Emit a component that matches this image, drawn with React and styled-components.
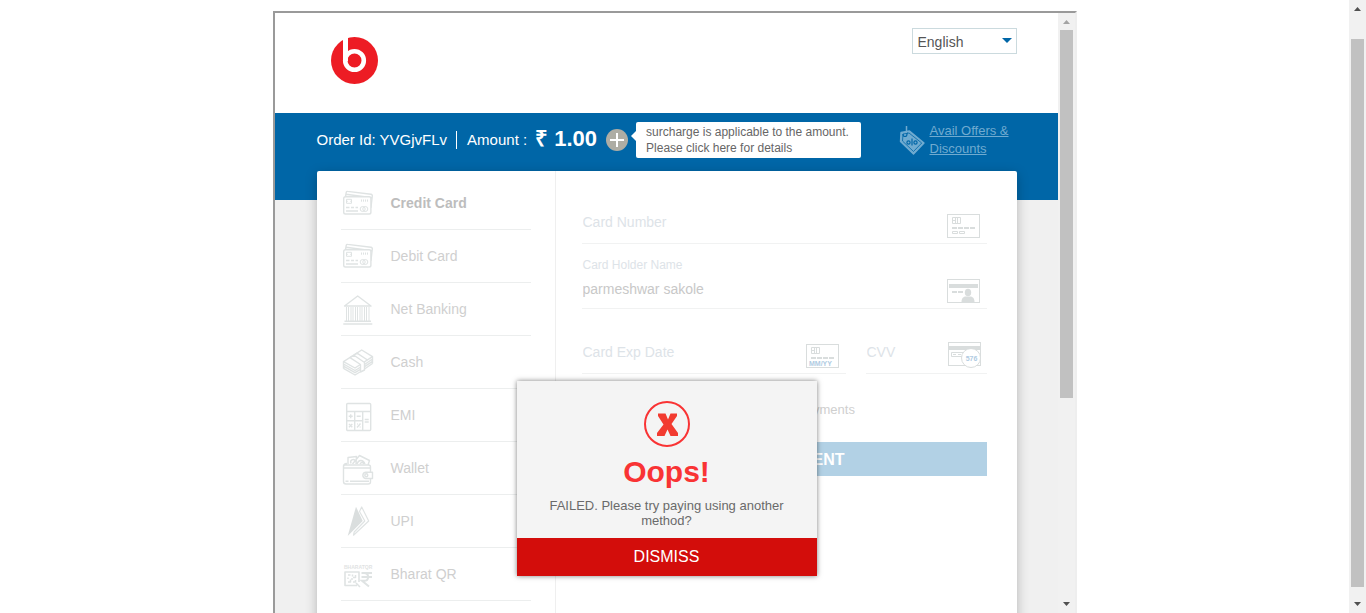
import React from "react";
import styled, { createGlobalStyle } from "styled-components";

const GlobalStyle = createGlobalStyle`
  *, *::before, *::after { box-sizing: border-box; }
  body {
    margin: 0;
    background: #fff;
    font-family: "Liberation Sans", Arial, sans-serif;
    font-size: 14px;
  }
  button, input, select { font-family: inherit; }
`;

const Page = styled.div`
  display: flex;
  height: 100vh;
  overflow: hidden;
`;

const Stage = styled.main`
  flex: 1;
  display: flex;
  justify-content: center;
  padding-top: 11px;
`;

const Frame = styled.div`
  display: flex;
  width: 100%;
  max-width: 804px;
  border: 2px solid #9a9a9a;
  border-right-color: #eee;
  border-bottom: 0;
  overflow: hidden;
`;

const FrameContent = styled.div`
  flex: 1;
  min-width: 0;
  background: #f0f0f0;
`;

const Container = styled.div`
  margin: 0 41px 0 42px;
`;

/* Scroll bars */
const Bar = styled.div`
  flex: none;
  display: flex;
  flex-direction: column;
  width: 17px;
  background: #f1f1f1;
`;

const BarArrow = styled.svg`
  flex: none;
  width: 17px;
  height: 17px;
  fill: ${(p) => (p.$dim ? "#a3a3a3" : "#505050")};
`;

const BarSpace = styled.div`
  flex: ${(p) => p.$size} 0 0;
`;

const BarThumb = styled.div`
  flex: ${(p) => p.$size} 0 0;
  margin: 0 2px;
  background: #c1c1c1;
`;

function Scrollbar({ before, thumb, after, atTop }) {
  return (
    <Bar aria-hidden="true">
      <BarArrow $dim={atTop} viewBox="0 0 17 17">
        <path d="M5 11h7L8.500 7z" />
      </BarArrow>
      <BarSpace $size={before} />
      <BarThumb $size={thumb} />
      <BarSpace $size={after} />
      <BarArrow viewBox="0 0 17 17">
        <path d="M5 6h7L8.500 10z" />
      </BarArrow>
    </Bar>
  );
}

/* Header */
const Header = styled.header`
  background: #fff;
`;

const HeaderRow = styled(Container)`
  display: flex;
  justify-content: space-between;
  align-items: flex-start;
  height: 100px;
  padding: 15px 0 0 14px;
`;

const Logo = styled.svg`
  width: 47px;
  height: 47px;
  margin-top: 9px;
`;

const LanguageBox = styled.label`
  position: relative;
  display: block;
`;

const LanguageSelect = styled.select`
  appearance: none;
  display: block;
  width: 105px;
  height: 26px;
  padding: 2px 20px 0 5px;
  border: 1px solid #cbdade;
  border-radius: 0;
  background: #fff;
  color: #555;
  font-size: 14px;
`;

const LanguageArrow = styled.svg`
  position: absolute;
  top: 10px;
  right: 5px;
  width: 10px;
  height: 5px;
  fill: #0066a7;
  pointer-events: none;
`;

/* Order bar */
const OrderBar = styled.section`
  display: flow-root;
  height: 87px;
  background: #0066a7;
  color: #fff;
`;

const OrderRow = styled(Container)`
  display: flex;
  align-items: center;
  height: 54px;
  font-size: 15px;
  line-height: 18px;
`;

const OrderId = styled.span`
  padding-right: 9px;
  border-right: 1px solid #fff;
`;

const AmountLabel = styled.span`
  margin-left: 10px;
`;

const Amount = styled.strong`
  margin: 0 9px 0 8px;
  height: 26px;
  font-size: 22px;
  line-height: 24px;
`;

const InfoButton = styled.button`
  flex: none;
  display: block;
  width: 22px;
  height: 22px;
  padding: 0;
  border: 0;
  border-radius: 50%;
  background: #aeada4;
  svg { display: block; }
`;

const Surcharge = styled.div`
  position: relative;
  width: 225px;
  margin-left: 8px;
  padding: 2px 10px;
  border-radius: 2px;
  background: #fff;
  color: #666;
  font-size: 12px;
  line-height: 16px;
  &::before {
    content: "";
    position: absolute;
    top: 9px;
    left: -5px;
    border: 5px solid transparent;
    border-left-width: 0;
    border-right-color: #fff;
  }
`;

const Offers = styled.a`
  display: flex;
  align-items: center;
  gap: 5px;
  margin-left: auto;
  width: 118px;
  color: #70abd0;
  font-size: 13px;
  line-height: 18px;
  svg { flex: none; }
`;

/* Payment card */
const PaymentCard = styled(Container)`
  position: relative;
  display: flex;
  min-height: 560px;
  margin-top: -29px;
  border-radius: 2px;
  background: #fff;
  box-shadow: 0 3px 12px rgba(0, 0, 0, 0.25);
`;

const Menu = styled.nav`
  flex: none;
  width: 239px;
  padding: 6px 24px 0;
  border-right: 1px solid #efefef;
`;

const MenuItem = styled.a`
  display: flex;
  align-items: center;
  gap: 17px;
  height: 53px;
  padding-left: 1px;
  border-bottom: 1px solid #eceeee;
  color: ${(p) => (p.$active ? "#bdbdbd" : "#cfcfcf")};
  font-weight: ${(p) => (p.$active ? "bold" : "normal")};
  text-decoration: none;
`;

const MenuIcon = styled.svg`
  flex: none;
  width: 32px;
  height: 32px;
  overflow: visible;
  fill: none;
  stroke: #dfe3e3;
  stroke-width: 1.4;
  stroke-linejoin: round;
`;

const Form = styled.form`
  flex: 1;
  min-width: 0;
  padding: 8px 30px 0 26px;
`;

const FieldRow = styled.div`
  display: flex;
  gap: 20px;
`;

const FieldBox = styled.div`
  flex: ${(p) => (p.$narrow ? "0 0 121px" : "1")};
  min-width: 0;
  display: flex;
  justify-content: space-between;
  align-items: flex-end;
  height: 65px;
  padding-right: ${(p) => (p.$narrow ? 6 : 7)}px;
  border-bottom: 1px solid #f1f2f2;
`;

const FieldText = styled.div`
  flex: 1;
  min-width: 0;
  display: flex;
  flex-direction: column;
`;

const FieldLabel = styled.label`
  height: 18px;
  padding-left: 1px;
  color: #dde3e8;
  font-size: 12px;
  line-height: 18px;
`;

const FieldInput = styled.input`
  width: 100%;
  height: 30px;
  margin-bottom: ${(p) => (p.placeholder ? 6 : 4)}px;
  padding: 0 0 0 1px;
  border: 0;
  background: transparent;
  color: #c8c8c8;
  font-size: 14px;
  &::placeholder { color: #dde3e8; opacity: 1; }
`;

const FieldIcon = styled.svg`
  flex: none;
  width: 33px;
  height: ${(p) => (p.$tall ? 27 : 24)}px;
  margin-bottom: ${(p) => (p.$tall ? 4 : 5)}px;
  fill: none;
  stroke: #d9dddd;
`;

const SaveRow = styled.label`
  display: flex;
  align-items: center;
  gap: 14px;
  height: 16px;
  margin-top: 27px;
  color: #cfcfcf;
  font-size: 13px;
  input { width: 13px; height: 13px; margin: 0; opacity: 0.3; }
`;

const PayButton = styled.button`
  display: block;
  width: 100%;
  height: 34px;
  margin-top: 25px;
  padding: 2px 6px 0 0;
  border: 0;
  background: #b2d1e5;
  color: #fff;
  font-size: 16px;
  font-weight: bold;
`;

/* Failure dialog */
const Dialog = styled.div`
  position: absolute;
  top: 210px;
  left: 50%;
  width: 300px;
  transform: translateX(-50%);
  background: #f4f4f4;
  box-shadow: 0 0 5px rgba(0, 0, 0, 0.5);
  text-align: center;
`;

const DialogIcon = styled.svg`
  display: block;
  width: 46px;
  height: 46px;
  margin: 0 auto;
`;

const DialogBody = styled.div`
  padding: 20px 30px 10px;
`;

const DialogTitle = styled.h1`
  margin: 6px 0 8px;
  color: #f93334;
  font-size: 30px;
  line-height: 37px;
`;

const DialogText = styled.p`
  margin: 0;
  color: #6a6a6a;
  font-size: 13px;
  line-height: 15px;
`;

const DismissButton = styled.button`
  display: block;
  width: 100%;
  height: 38px;
  border: 0;
  background: #d30d0b;
  color: #fff;
  font-size: 16px;
`;

const drawings = {
  cards: (
    <>
      <path d="M3.500 9.500 4.300 5.200Q4.500 4.200 5.600 4.400L29 7.300Q30.500 7.500 30.300 9L28.900 21M4 7.200 30 10.800" />
      <rect x="1.700" y="9.700" width="27.200" height="17.300" rx="1.800" fill="#fff" />
      <rect x="4.500" y="12.300" width="5" height="4" strokeWidth="1" />
      <path d="M4.500 14.300h1.500M8 14.300h1.500" strokeWidth=".8" />
      <path d="M19.500 12.500v2.200M21.500 12.500v2.200M23.500 12.500v2.200M25.500 12.500v2.200" strokeWidth="1" />
      <path d="M4 20.500h3.500M9 20.500h3M13.500 20.500h2.500M4 24h12" />
      <circle cx="20.700" cy="22" r="2.500" strokeWidth="1" />
      <circle cx="23.300" cy="22" r="2.500" strokeWidth="1" />
    </>
  ),
  bank: (
    <>
      <path d="M2.500 13 15.700 3 29 13z" />
      <path d="M4.500 14v14M6.500 14v14M9 14v14M11 14v14M13.500 14v14M15.500 14v14M18 14v14M20 14v14M22.500 14v14M24.500 14v14M27 14v14" strokeWidth="1" />
      <path d="M2.500 28.300h26.500M1.300 31h29" strokeWidth="1.600" />
    </>
  ),
  cash: (
    <>
      <path d="M1.500 15.700 19.700 4 30.500 10.700 13 22z" />
      <path d="M1.500 18 13 24.500 18 21.500M1.500 20.200 13 26.700 18 23.700M1.500 22.400 13 29 18 26M22.500 18.500 30.500 13M22.500 20.700 30.500 15.300M22.500 23 30.500 17.500M1.500 15.700v6.700M30.500 10.700v6.800" />
      <path d="M8 11.700 18.500 18.500v7.500l4-2V16.500L12 9.200zM12 9.200 15 7.200 25.500 14" fill="#fff" />
    </>
  ),
  calculator: (
    <>
      <rect x="4.700" y="4.500" width="24" height="27" rx="1" />
      <path d="M4.700 12.500h24M12.700 12.500v19M20.700 12.500v19M4.700 21.700h16" />
      <path d="M6.700 17.200h4M8.700 15.200v4M14.700 17.200h4M22.700 20.500h4M22.700 23h4M7 25l3.300 3.300M10.300 25 7 28.300M15 28.500l3.500-4M15.200 25h.8M17.700 28h.8" />
    </>
  ),
  wallet: (
    <>
      <path d="M6 12V5.500L14.500 4.500 14 12M10.500 12 17.500 3.500 27.500 8.500 26 13M9 11.500C7.500 8 11.500 6.500 13 8.500M15 12C16.500 7.500 21 7 23 12M18 12Q20 9 22 12" />
      <path d="M28.500 20V15Q28.500 13 26.500 13H3Q1.500 13 1.500 15v14.500Q1.500 32 4 32h22Q28.500 32 28.500 30v-3.500M1.500 15Q1 11.500 5 11.500M1.500 16h27" />
      <path d="M30.500 20.200h-7a3.200 3.200 0 0 0 0 6.300h7z" fill="#fff" />
      <circle cx="24.300" cy="23.300" r="1.500" />
      <path d="M3.500 29.200h3M8 29.200h19" />
    </>
  ),
  upi: (
    <>
      <path d="M14 1.700 20.700 16 5.700 31z" fill="#dadede" stroke="none" />
      <path d="M17.500 6.500 19.700 2 26.700 16 11.500 30.200 12.200 27 22.800 16z" strokeWidth="1.200" />
    </>
  ),
  bharat: (
    <>
      <text x="2" y="10.800" fontSize="5" fontWeight="bold" fill="#dfe3e3" stroke="none">BHARATQR</text>
      <path d="M17 24V14H3v13.500h12M14 25l4 4" strokeWidth="1.600" />
      <path d="M6 17h2.500M6 19.500v1.500M6 24h2.500v-2.500M10.500 16.500v2M13.500 17v2.500H11M9 21h2M13.500 22v2h-2.500" strokeWidth="1.500" />
      <path d="M19.500 15h10.500M19.500 19h10.500M22 15c5.500 0 5.500 7.800 0 7.800h-2l7 5.700" strokeWidth="2" strokeLinejoin="miter" />
    </>
  ),
};

const methods = [
  { name: "Credit Card", icon: "cards" },
  { name: "Debit Card", icon: "cards" },
  { name: "Net Banking", icon: "bank" },
  { name: "Cash", icon: "cash" },
  { name: "EMI", icon: "calculator" },
  { name: "Wallet", icon: "wallet" },
  { name: "UPI", icon: "upi" },
  { name: "Bharat QR", icon: "bharat" },
];

const chip = (
  <>
    <rect x=".5" y=".5" width="32" height="23" />
    <path d="M5.500 3.500h8v6h-8zM5.500 6.500h3M8.500 3.500v6M10.500 3.500v6" />
    <path d="M5 14h5M11 14h5M17 14h5M23 14h5" strokeWidth="2" />
  </>
);

const fieldDrawings = {
  number: (
    <>
      {chip}
      <path d="M5.500 17.500h5v2h-5zM12.500 17.500h5v2h-5z" />
    </>
  ),
  holder: (
    <>
      <rect x=".5" y=".5" width="32" height="23" />
      <path d="M2 7h29" strokeWidth="4" />
      <path d="M5 13h5M11 13h5" strokeWidth="2" />
      <g fill="#d9dddd" stroke="none">
        <ellipse cx="21" cy="13.500" rx="3.200" ry="3.800" />
        <path d="M14.500 23c0-4 2-5.500 4.500-5.500h4c2.500 0 4.500 1.500 4.500 5.500z" />
      </g>
    </>
  ),
  expiry: (
    <>
      {chip}
      <text x="3" y="21.500" fontSize="7" fontWeight="bold" fill="#b0cbe2" stroke="none">MM/YY</text>
    </>
  ),
  cvv: (
    <>
      <rect x=".5" y=".5" width="32" height="23" />
      <path d="M0 6h33" strokeWidth="4" />
      <path d="M15 10.500H3.500v4H14M5 12.500h3M10 12.500h3" />
      <circle cx="23" cy="16" r="9.500" fill="#fff" />
      <text x="23.500" y="18.500" fontSize="7" fontWeight="bold" textAnchor="middle" fill="#b0cbe2" stroke="none">576</text>
    </>
  ),
};

function Field({ id, name, value, icon, narrow }) {
  return (
    <FieldBox $narrow={narrow}>
      <FieldText>
        {value && <FieldLabel htmlFor={id}>{name}</FieldLabel>}
        <FieldInput
          id={id}
          defaultValue={value}
          placeholder={value ? undefined : name}
          aria-label={name}
        />
      </FieldText>
      <FieldIcon $tall={icon === "cvv"} viewBox={icon === "cvv" ? "0 0 33 27" : "0 0 33 24"} aria-hidden="true">
        {fieldDrawings[icon]}
      </FieldIcon>
    </FieldBox>
  );
}

export default function App() {
  return (
    <Page>
      <GlobalStyle />
      <Stage>
        <Frame>
          <FrameContent>
            <Header>
              <HeaderRow>
                <Logo viewBox="0 0 47 47" role="img" aria-label="Beats">
                  <circle cx="23.500" cy="23.500" r="23.500" fill="#ed1c24" />
                  <path d="M12 0h5v24h-5z" fill="#fff" />
                  <circle cx="23.500" cy="23.500" r="9.300" fill="none" stroke="#fff" strokeWidth="4.600" />
                </Logo>
                <LanguageBox>
                  <LanguageSelect aria-label="Language" defaultValue="English">
                    <option>English</option>
                  </LanguageSelect>
                  <LanguageArrow viewBox="0 0 10 5">
                    <path d="M0 0h10L5 5z" />
                  </LanguageArrow>
                </LanguageBox>
              </HeaderRow>
            </Header>

            <OrderBar>
              <OrderRow>
                <OrderId>Order Id: YVGjvFLv</OrderId>
                <AmountLabel>Amount :</AmountLabel>
                <Amount>₹ 1.00</Amount>
                <InfoButton type="button" aria-label="Surcharge details">
                  <svg width="22" height="22" viewBox="0 0 22 22">
                    <path d="M4 11h14M11 4v14" stroke="#fff" strokeWidth="2" />
                  </svg>
                </InfoButton>
                <Surcharge>
                  surcharge is applicable to the amount. Please click here for details
                </Surcharge>
                <Offers href="#offers">
                  <svg width="26" height="30" viewBox="0 0 26 30" fill="none" stroke="#70abd0">
                    <path d="M2 7.500 10.500 6 25 18 14.500 29 1.500 16.500z" strokeWidth="1.400" fill="#70abd0" strokeLinejoin="round" />
                    <path d="M4 9 10 8 22.700 18 14.500 26.500 3.500 16z" stroke="#0066a7" strokeWidth=".8" />
                    <path d="M8 7v2Q8 11.500 6 11.500T4 9" stroke="#0066a7" strokeWidth="1.200" />
                    <path d="M7.500 1v7" strokeWidth="1.500" />
                    <g stroke="#0066a7" strokeWidth="1.200">
                      <circle cx="9.500" cy="17.500" r="1.600" />
                      <circle cx="16.500" cy="17.500" r="1.600" />
                      <path d="M13 13.500v7" />
                    </g>
                  </svg>
                  <span>Avail Offers &amp; Discounts</span>
                </Offers>
              </OrderRow>
            </OrderBar>

            <PaymentCard>
              <Menu aria-label="Payment methods">
                {methods.map((method, index) => (
                  <MenuItem key={method.name} href="#pay" $active={index === 0}>
                    <MenuIcon viewBox="0 0 32 32" aria-hidden="true">
                      {drawings[method.icon]}
                    </MenuIcon>
                    {method.name}
                  </MenuItem>
                ))}
              </Menu>

              <Form onSubmit={(event) => event.preventDefault()}>
                <Field id="number" name="Card Number" icon="number" />
                <Field id="holder" name="Card Holder Name" value="parmeshwar sakole" icon="holder" />
                <FieldRow>
                  <Field id="expiry" name="Card Exp Date" icon="expiry" />
                  <Field id="cvv" name="CVV" icon="cvv" narrow />
                </FieldRow>
                <SaveRow>
                  <input type="checkbox" />
                  Save your card with us for faster payments
                </SaveRow>
                <PayButton type="submit">MAKE PAYMENT</PayButton>
              </Form>

              <Dialog role="alertdialog" aria-labelledby="dialog-title">
                <DialogBody>
                  <DialogIcon viewBox="0 0 46 46" aria-hidden="true">
                    <circle cx="23" cy="23" r="22" fill="none" stroke="#f93334" strokeWidth="2" />
                    <path d="M14 12.500H21.500L24 18.500 26.500 12.500H33V15L27.500 23 34 32V35H26.500L23.500 28.500 20.500 35H13V32L19.500 23.500 14 15z" fill="#f23b30" />
                  </DialogIcon>
                  <DialogTitle id="dialog-title">Oops!</DialogTitle>
                  <DialogText>FAILED. Please try paying using another method?</DialogText>
                </DialogBody>
                <DismissButton type="button">DISMISS</DismissButton>
              </Dialog>
            </PaymentCard>
          </FrameContent>
          <Scrollbar before={0} thumb={368} after={198} atTop />
        </Frame>
      </Stage>
      <Scrollbar before={22} thumb={548} after={9} />
    </Page>
  );
}
